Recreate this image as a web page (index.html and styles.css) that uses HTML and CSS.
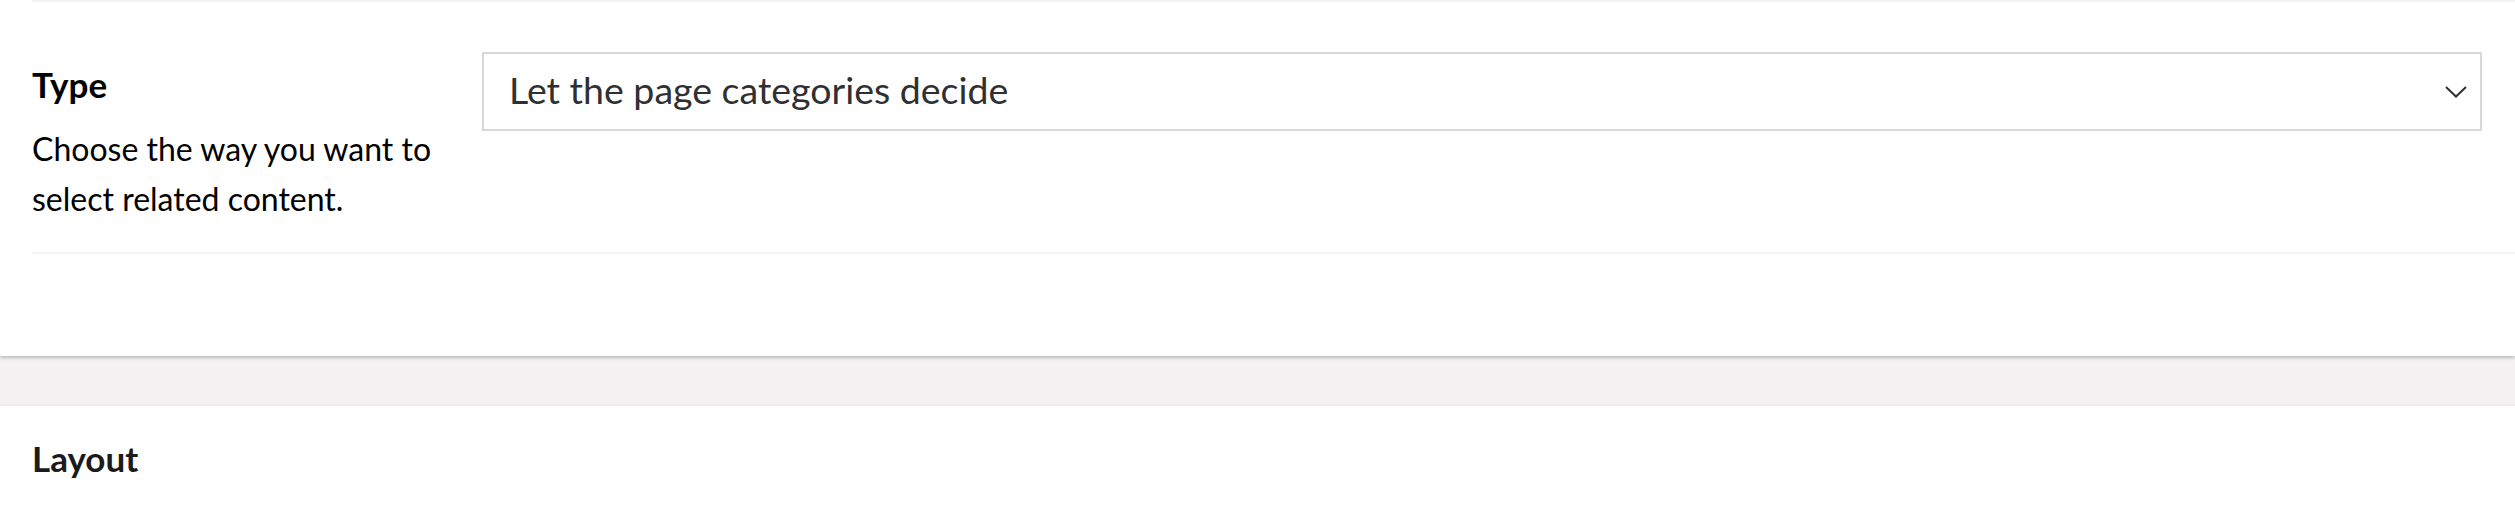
FILE: index.html
```html
<!DOCTYPE html>
<html lang="en">
<head>
<meta charset="utf-8">
<title>Related content settings</title>
<link rel="stylesheet" href="styles.css">
</head>
<body>
  <section class="panel panel-first">
    <div class="rule"></div>
    <div class="prop-row">
      <div class="prop-label">
        <div class="label">Type</div>
        <div class="desc">Choose the way you want to select related content.</div>
      </div>
      <div class="prop-control">
        <div class="select">
          <span class="select-text">Let the page categories decide</span>
          <svg class="chevron" width="22" height="12" viewBox="0 0 22 12" aria-hidden="true">
            <polyline points="1,1 11,10.5 21,1" fill="none" stroke="#303033" stroke-width="2"/>
          </svg>
        </div>
      </div>
    </div>
    <div class="panel-foot"></div>
  </section>
  <div class="gap"></div>
  <section class="panel panel-next">
    <h2 class="group-title">Layout</h2>
  </section>
</body>
</html>
```
FILE: styles.css
```css
html, body {
  margin: 0;
  padding: 0;
  background: #ffffff;
}

body {
  font-family: "Lato", "Open Sans", "Noto Sans", sans-serif;
  color: #000000;
}

.panel {
  background: #ffffff;
  padding-left: 32px;
}

.panel-first {
  position: relative;
  z-index: 1;
  box-shadow: 0 2px 3px rgba(0, 0, 0, 0.22);
}

.rule {
  height: 2px;
  background: #f3f3f5;
}

.prop-row {
  display: grid;
  grid-template-columns: 450px 1fr;
  padding-top: 50px;
  padding-bottom: 28px;
  border-bottom: 2px solid #f3f3f5;
}

.prop-label {
  padding-right: 20px;
  padding-top: 12px;
}

.label {
  font-weight: 700;
  font-size: 35px;
  line-height: 40px;
  margin-bottom: 20px;
}

.desc {
  font-size: 32px;
  line-height: 50px;
}

.prop-control {
  padding-right: 33px;
}

.select {
  display: flex;
  align-items: center;
  justify-content: space-between;
  height: 75px;
  border: 2px solid #d8d8d8;
  padding: 0 13px 0 25px;
  background: #ffffff;
}

.select-text {
  font-size: 37.5px;
  color: #303033;
  padding-bottom: 4px;
}

.chevron {
  display: block;
  flex: none;
}

.panel-foot {
  height: 102px;
}

.gap {
  height: 48px;
  background: #f3f1f2;
  border-bottom: 2px solid #efedee;
}

.group-title {
  margin: 0;
  padding-top: 27px;
  font-size: 35px;
  line-height: 50px;
  font-weight: 700;
  color: #1b1b1b;
  height: 82px;
}
```
